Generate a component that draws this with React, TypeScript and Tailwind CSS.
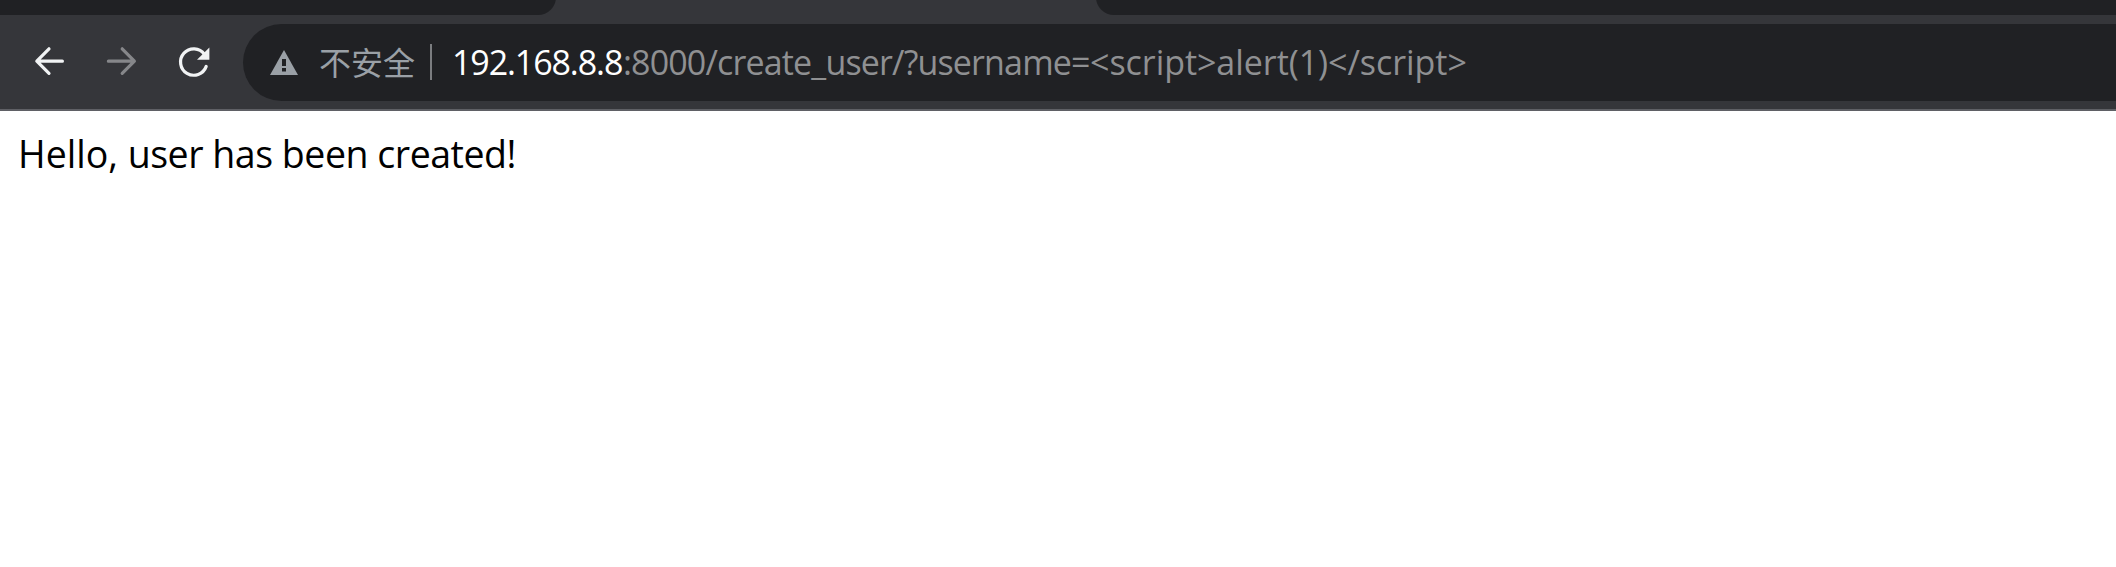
import React from "react";

function TabStrip() {
  return (
    <div className="flex h-[15px] overflow-hidden">
      <div className="flex h-full w-[556px] items-end">
        <div className="-mt-6 h-[40px] w-full shrink-0 rounded-br-[18px] bg-[#202124]" />
      </div>
      <div className="w-[540px]" />
      <div className="flex h-full flex-1 items-end">
        <div className="-mt-6 h-[40px] w-full shrink-0 rounded-bl-[18px] bg-[#202124]" />
      </div>
    </div>
  );
}

function ArrowIcon({ forward = false }: { forward?: boolean }) {
  return (
    <svg width="32" height="32" viewBox="0 0 32 32" fill="none" stroke={forward ? "#86878a" : "#f1f3f4"} strokeWidth="3.2" strokeLinecap="round" strokeLinejoin="round">
      {forward ? <path d="M3.4 16.2H28.6M17.2 3.8L29.4 16.2L17.2 28.4" /> : <path d="M29.4 16.2H4.6M16 3.8L3.8 16.2L16 28.4" />}
    </svg>
  );
}

function ReloadIcon() {
  return (
    <svg width="34" height="34" viewBox="0 0 34 34" fill="none">
      <path d="M27.4 9.2A13.2 13.2 0 1 0 29.2 21.4" stroke="#f1f3f4" strokeWidth="3.2" strokeLinecap="round" />
      <path d="M32.4 2.6V14.8H20Z" fill="#f1f3f4" />
    </svg>
  );
}

function WarningIcon() {
  return (
    <svg width="28" height="25" viewBox="0 0 28 25">
      <path d="M14 0L28 25H0Z" fill="#9aa0a6" />
      <path d="M12 9h4v7h-4zM12 18h4v3.5h-4z" fill="#202124" />
    </svg>
  );
}

export default function App() {
  return (
    <div className="h-[567px] w-full overflow-hidden bg-white font-['Open_Sans','Noto_Sans_CJK_SC',sans-serif]">
      <header className="h-[111px] border-b-2 border-[#5f6065] bg-[#35363a]">
        <TabStrip />
        <div className="flex h-[94px] pt-[9px]">
          <nav className="flex h-[77px] w-[243px] shrink-0">
            <button aria-label="Back" className="ml-[33px] mt-[21px] h-8 w-8"><ArrowIcon /></button>
            <button aria-label="Forward" className="ml-[40px] mt-[21px] h-8 w-8"><ArrowIcon forward /></button>
            <button aria-label="Reload" className="ml-[40px] mt-[21px] h-[34px] w-[34px]"><ReloadIcon /></button>
          </nav>
          <div className="flex h-[77px] flex-1 rounded-l-full bg-[#202124]">
            <div className="ml-[27px] mt-[26px] h-[25px] w-7 shrink-0"><WarningIcon /></div>
            <div className="ml-[21px] mt-[13px] w-[96px] shrink-0 whitespace-nowrap font-['Noto_Sans_CJK_SC',sans-serif] text-[32px] leading-[48px] text-[#9aa0a6]">不安全</div>
            <div className="ml-[15px] mt-5 h-9 w-[2px] shrink-0 bg-[#7b7d80]" />
            <div className="ml-[20px] mt-[14px] flex whitespace-nowrap text-[34px] leading-[48px] text-[#8f9092]">
              <span className="w-[171px] shrink-0 tracking-[-1.1px] text-white">192.168.8.8</span>
              <span className="w-[467px] shrink-0 tracking-[-0.85px]">:8000/create_user/?username=</span>
              <span className="tracking-[-0.05px]">&lt;script&gt;alert(1)&lt;/script&gt;</span>
            </div>
          </div>
        </div>
      </header>
      <main className="pl-[18px] pt-[18px] text-[37.5px] leading-[50px] text-black">
        <span>Hello, </span>
        <span className="tracking-[-0.47px]">user has been created!</span>
      </main>
    </div>
  );
}
